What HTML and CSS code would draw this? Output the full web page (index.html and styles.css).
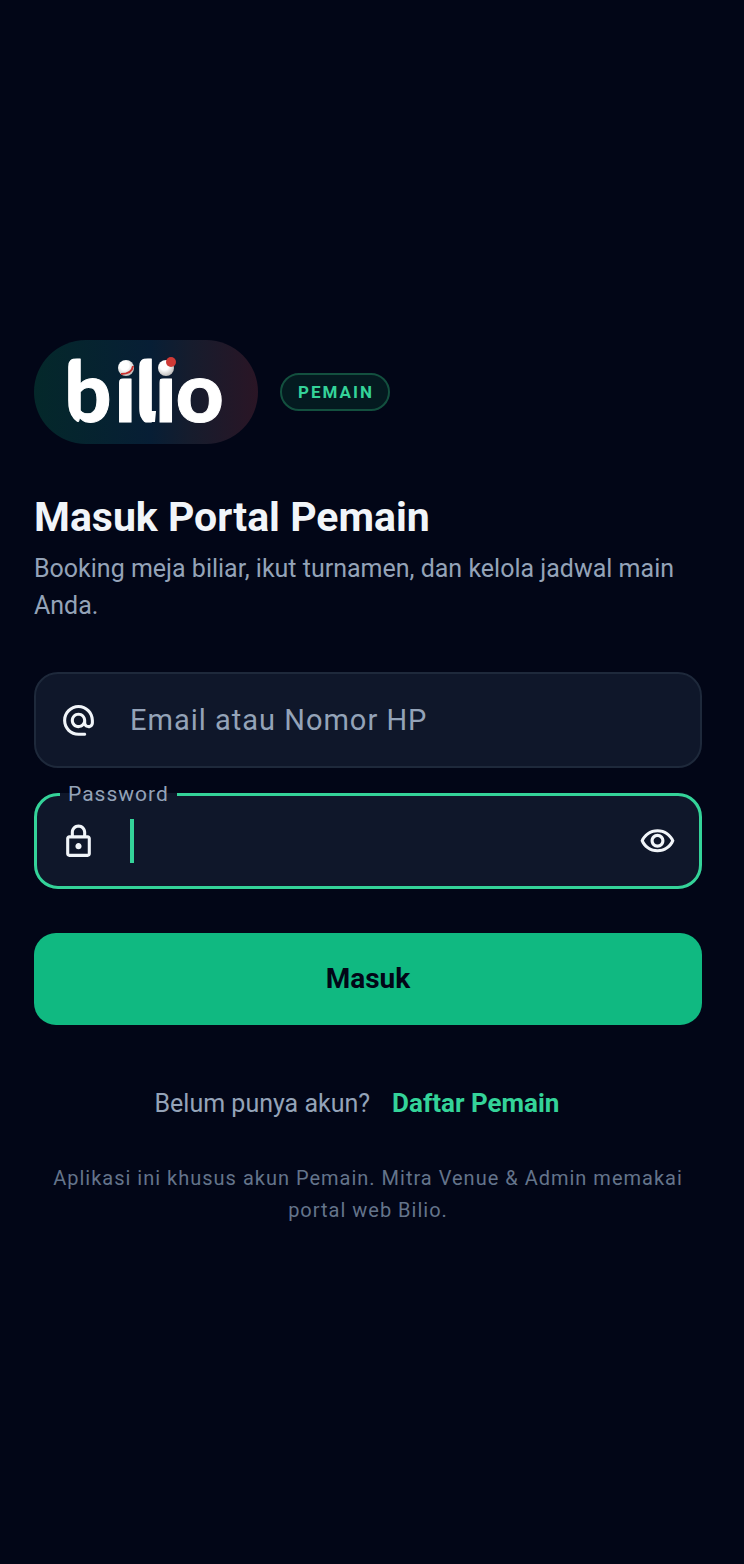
FILE: index.html
```html
<!DOCTYPE html>
<html lang="id">
<head>
<meta charset="utf-8">
<meta name="viewport" content="width=device-width, initial-scale=1">
<title>Masuk Portal Pemain</title>
<link rel="stylesheet" href="styles.css">
</head>
<body>
<main class="page">
  <header class="brand">
    <div class="logo">
      <svg class="logo-mark" viewBox="0 0 160 68" role="img" aria-label="bilio">
        <defs>
          <radialGradient id="ball" cx="0.4" cy="0.35" r="0.7">
            <stop offset="0.4" stop-color="#ffffff"/>
            <stop offset="1" stop-color="#b9b6b4"/>
          </radialGradient>
          <clipPath id="rounded">
            <path d="M2 11Q2 2 11 2H50V70H24Q2 68 2 44Z"/>
            <path d="M53 27Q53 22 58 22H69V70H53Z"/>
            <path d="M73 11Q73 2 82 2H89V70H86Q73 66 73 52Z"/>
            <path d="M93 27Q93 22 98 22H109V70H93Z"/>
            <path d="M110 0H162V70H110Z"/>
          </clipPath>
        </defs>
        <g clip-path="url(#rounded)">
          <text class="logo-text" x="-2" y="66" dx="0 3 -1 -1 -1">bilio</text>
        </g>
        <path d="M82 55H90L89 66H82Z" fill="#fff"/>
        <circle cx="60" cy="12" r="8" fill="url(#ball)"/>
        <path d="M67 10Q66 18 55 18" fill="none" stroke="#c8312f" stroke-width="2"/>
        <circle cx="100" cy="12" r="8" fill="url(#ball)"/>
        <circle cx="105" cy="6" r="5" fill="#cf3a36"/>
      </svg>
    </div>
    <span class="tag">PEMAIN</span>
  </header>

  <h1 class="title">Masuk Portal Pemain</h1>
  <p class="subtitle">Booking meja biliar, ikut turnamen, dan kelola jadwal main Anda.</p>

  <form class="form">
    <div class="field">
      <svg class="icon" viewBox="0 0 24 24" aria-hidden="true"><path fill="currentColor" d="M12 1.95c-5.52 0-10 4.48-10 10s4.48 10 10 10h4c.55 0 1-.45 1-1s-.45-1-1-1h-4c-4.34 0-8-3.66-8-8s3.66-8 8-8 8 3.66 8 8v1.43c0 .79-.71 1.57-1.5 1.57s-1.500-.78-1.500-1.570v-1.430c0-2.760-2.240-5-5-5s-5 2.240-5 5 2.240 5 5 5c1.380 0 2.640-.56 3.540-1.470.65.89 1.770 1.470 2.960 1.470 1.970 0 3.500-1.600 3.500-3.570v-1.430c0-5.520-4.480-10-10-10zm0 13c-1.660 0-3-1.340-3-3s1.340-3 3-3 3 1.340 3 3-1.340 3-3 3z"/></svg>
      <input class="input" type="text" placeholder="Email atau Nomor HP" aria-label="Email atau Nomor HP">
    </div>
    <fieldset class="field-active">
      <legend class="legend"><label for="password">Password</label></legend>
      <div class="field-row">
        <svg class="icon" viewBox="0 0 24 24" aria-hidden="true"><path fill="currentColor" d="M18 8h-1V6c0-2.760-2.240-5-5-5S7 3.240 7 6v2H6c-1.100 0-2 .9-2 2v10c0 1.100.9 2 2 2h12c1.100 0 2-.9 2-2V10c0-1.100-.9-2-2-2zM9 6c0-1.660 1.340-3 3-3s3 1.340 3 3v2H9V6zm9 14H6V10h12v10zm-6-3c1.100 0 2-.9 2-2s-.9-2-2-2-2 .9-2 2 .9 2 2 2z"/></svg>
        <span class="caret"></span>
        <input class="input" id="password" type="password">
        <button class="reveal" type="button" aria-label="Tampilkan password">
          <svg class="icon" viewBox="0 0 24 24" aria-hidden="true"><path fill="currentColor" d="M12 6c3.790 0 7.170 2.130 8.820 5.500C19.170 14.870 15.790 17 12 17s-7.170-2.130-8.820-5.500C4.830 8.130 8.210 6 12 6m0-2C7 4 2.730 7.110 1 11.500 2.730 15.890 7 19 12 19s9.270-3.110 11-7.500C21.270 7.110 17 4 12 4zm0 5c1.380 0 2.500 1.120 2.500 2.500S13.380 14 12 14s-2.500-1.120-2.500-2.500S10.620 9 12 9m0-2c-2.480 0-4.500 2.020-4.500 4.500S9.520 16 12 16s4.500-2.020 4.500-4.500S14.480 7 12 7z"/></svg>
        </button>
      </div>
    </fieldset>
    <button class="submit" type="submit">Masuk</button>
  </form>

  <p class="signup">Belum punya akun? <a class="signup-link" href="#daftar">Daftar Pemain</a></p>
  <p class="note">Aplikasi ini khusus akun Pemain. Mitra Venue &amp; Admin memakai portal web Bilio.</p>
</main>
</body>
</html>
```
FILE: styles.css
```css
* { box-sizing: border-box; }

body {
  margin: 0;
  background: #020617;
  color: #f1f5f9;
  font-family: Roboto, "Liberation Sans", sans-serif;
}

.page {
  min-height: 100vh;
  padding: 26px 42px 24px 34px;
  display: flex;
  flex-direction: column;
  justify-content: center;
}

.brand { display: flex; align-items: center; gap: 22px; }

.logo {
  padding: 16px 32px 20px;
  border-radius: 52px;
  background: linear-gradient(90deg, #04282a, #071e35 52%, #161c2d 70%, #2a1525);
}
.logo-mark { display: block; width: 160px; height: 68px; overflow: visible; }
.logo-text {
  font-family: Lato, sans-serif;
  font-weight: 900;
  font-size: 83px;
  fill: #fff;
  stroke: #fff;
  stroke-width: 1px;
  stroke-linejoin: round;
}

.tag {
  padding: 0 14px 0 16px;
  border: 2px solid #13503f;
  border-radius: 19px;
  background: #041a20;
  color: #34d399;
  font-size: 17px;
  font-weight: 700;
  line-height: 34px;
  letter-spacing: 2px;
}

.title { margin: 48px 0 0; font-size: 41px; font-weight: 700; line-height: 50px; }

.subtitle {
  margin: 8px 0 0;
  color: #94a3b8;
  font-size: 25px;
  line-height: 37px;
}

.form { margin-top: 48px; display: flex; flex-direction: column; }

.field {
  height: 96px;
  padding: 0 24px;
  display: flex;
  align-items: center;
  gap: 33px;
  border: 2px solid #1e293b;
  border-radius: 24px;
  background: #0f172a;
}

.icon { display: block; flex: none; width: 37px; height: 37px; color: #f1f5f9; }

.input {
  flex: 1;
  min-width: 0;
  padding: 0;
  border: 0;
  outline: 0;
  background: transparent;
  color: #f1f5f9;
  font: 29px/44px Roboto, "Liberation Sans", sans-serif;
  letter-spacing: 1px;
}
.input::placeholder { color: #94a3b8; opacity: 1; }

.field-active {
  min-width: 0;
  margin: 12px 0 0;
  padding: 0 23px 23px;
  border: 3px solid #34d399;
  border-radius: 24px;
  background: #0f172a;
}
.legend {
  padding: 0 8px;
  color: #94a3b8;
  font-size: 21px;
  line-height: 28px;
  letter-spacing: 1px;
}
.field-row { display: flex; align-items: center; padding-top: 11px; }
.caret { width: 4px; height: 44px; margin-left: 33px; background: #34d399; }
.reveal { padding: 0; border: 0; background: transparent; }

.submit {
  height: 92px;
  margin-top: 44px;
  border: 0;
  border-radius: 22px;
  background: #10b981;
  color: #020617;
  font: 700 28px/36px Roboto, "Liberation Sans", sans-serif;
}

.signup {
  margin: 60px 0 0;
  padding-right: 22px;
  display: flex;
  justify-content: center;
  align-items: baseline;
  gap: 22px;
  color: #94a3b8;
  font-size: 25px;
  line-height: 36px;
}
.signup-link {
  color: #34d399;
  font-size: 26px;
  font-weight: 700;
  text-decoration: none;
}

.note {
  margin: 40px 0 0;
  color: #64748b;
  font-size: 20px;
  line-height: 32px;
  letter-spacing: 1px;
  text-align: center;
}
```
